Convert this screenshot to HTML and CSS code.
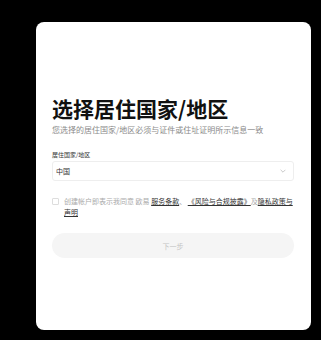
FILE: index.html
```html
<!DOCTYPE html>
<html lang="zh-CN">
<head>
  <meta charset="UTF-8">
  <meta name="viewport" content="width=device-width, initial-scale=1">
  <title>选择居住国家/地区</title>
  <link rel="stylesheet" href="styles.css">
</head>
<body>
  <div class="card">
    <h1 class="title">选择居住国家/地区</h1>
    <p class="subtitle">您选择的居住国家/地区必须与证件或住址证明所示信息一致</p>

    <div class="label">居住国家/地区</div>
    <div class="select">
      <span>中国</span>
      <svg class="chevron" viewBox="0 0 10 6" width="6" height="4">
        <path d="M1 1 L5 5 L9 1" fill="none" stroke="#bbb" stroke-width="1.3"/>
      </svg>
    </div>

    <label class="agree">
      <span class="box"></span>
      <span class="agree-text">创建帐户即表示我同意 欧易 <a href="#">服务条款</a>、 <a href="#">《风险与合规披露》</a>及<a href="#">隐私政策与声明</a></span>
    </label>

    <button class="next" disabled>下一步</button>
  </div>
</body>
</html>
```

FILE: styles.css
```css
* {
  box-sizing: border-box;
}

html, body {
  height: 100%;
}

body {
  margin: 0;
  background: #000;
  font-family: "Noto Sans CJK SC", "Noto Sans", sans-serif;
  padding: 22px 10px 10px 36px;
}

.card {
  background: #fff;
  border-radius: 8px;
  height: 308px;
  padding: 74px 17px 0 16px;
}

.title {
  margin: 0;
  font-size: 21px;
  line-height: 25px;
  font-weight: 700;
  color: #111;
}

.subtitle {
  margin: 3px 0 0;
  font-size: 8px;
  line-height: 12px;
  color: #8a8a8a;
}

.label {
  margin-top: 14px;
  font-size: 6px;
  line-height: 10px;
  color: #333;
}

.select {
  margin-top: 1px;
  height: 20px;
  border: 1px solid #eee;
  border-radius: 3px;
  display: flex;
  align-items: center;
  justify-content: space-between;
  padding: 0 7px 0 3px;
  font-size: 7px;
  color: #333;
}

.agree {
  margin-top: 15px;
  display: flex;
  align-items: flex-start;
  gap: 5px;
  font-size: 7px;
  line-height: 11px;
  color: #aaa;
}

.box {
  flex: none;
  width: 7px;
  height: 7px;
  margin-top: 2px;
  border: 1px solid #ddd;
  border-radius: 1px;
}

.agree-text a {
  color: #333;
  text-decoration: underline;
}

.next {
  margin-top: 15px;
  width: 100%;
  height: 25px;
  border: none;
  border-radius: 13px;
  background: #f5f5f5;
  color: #c4c4c4;
  font-family: inherit;
  font-size: 7px;
}
```
